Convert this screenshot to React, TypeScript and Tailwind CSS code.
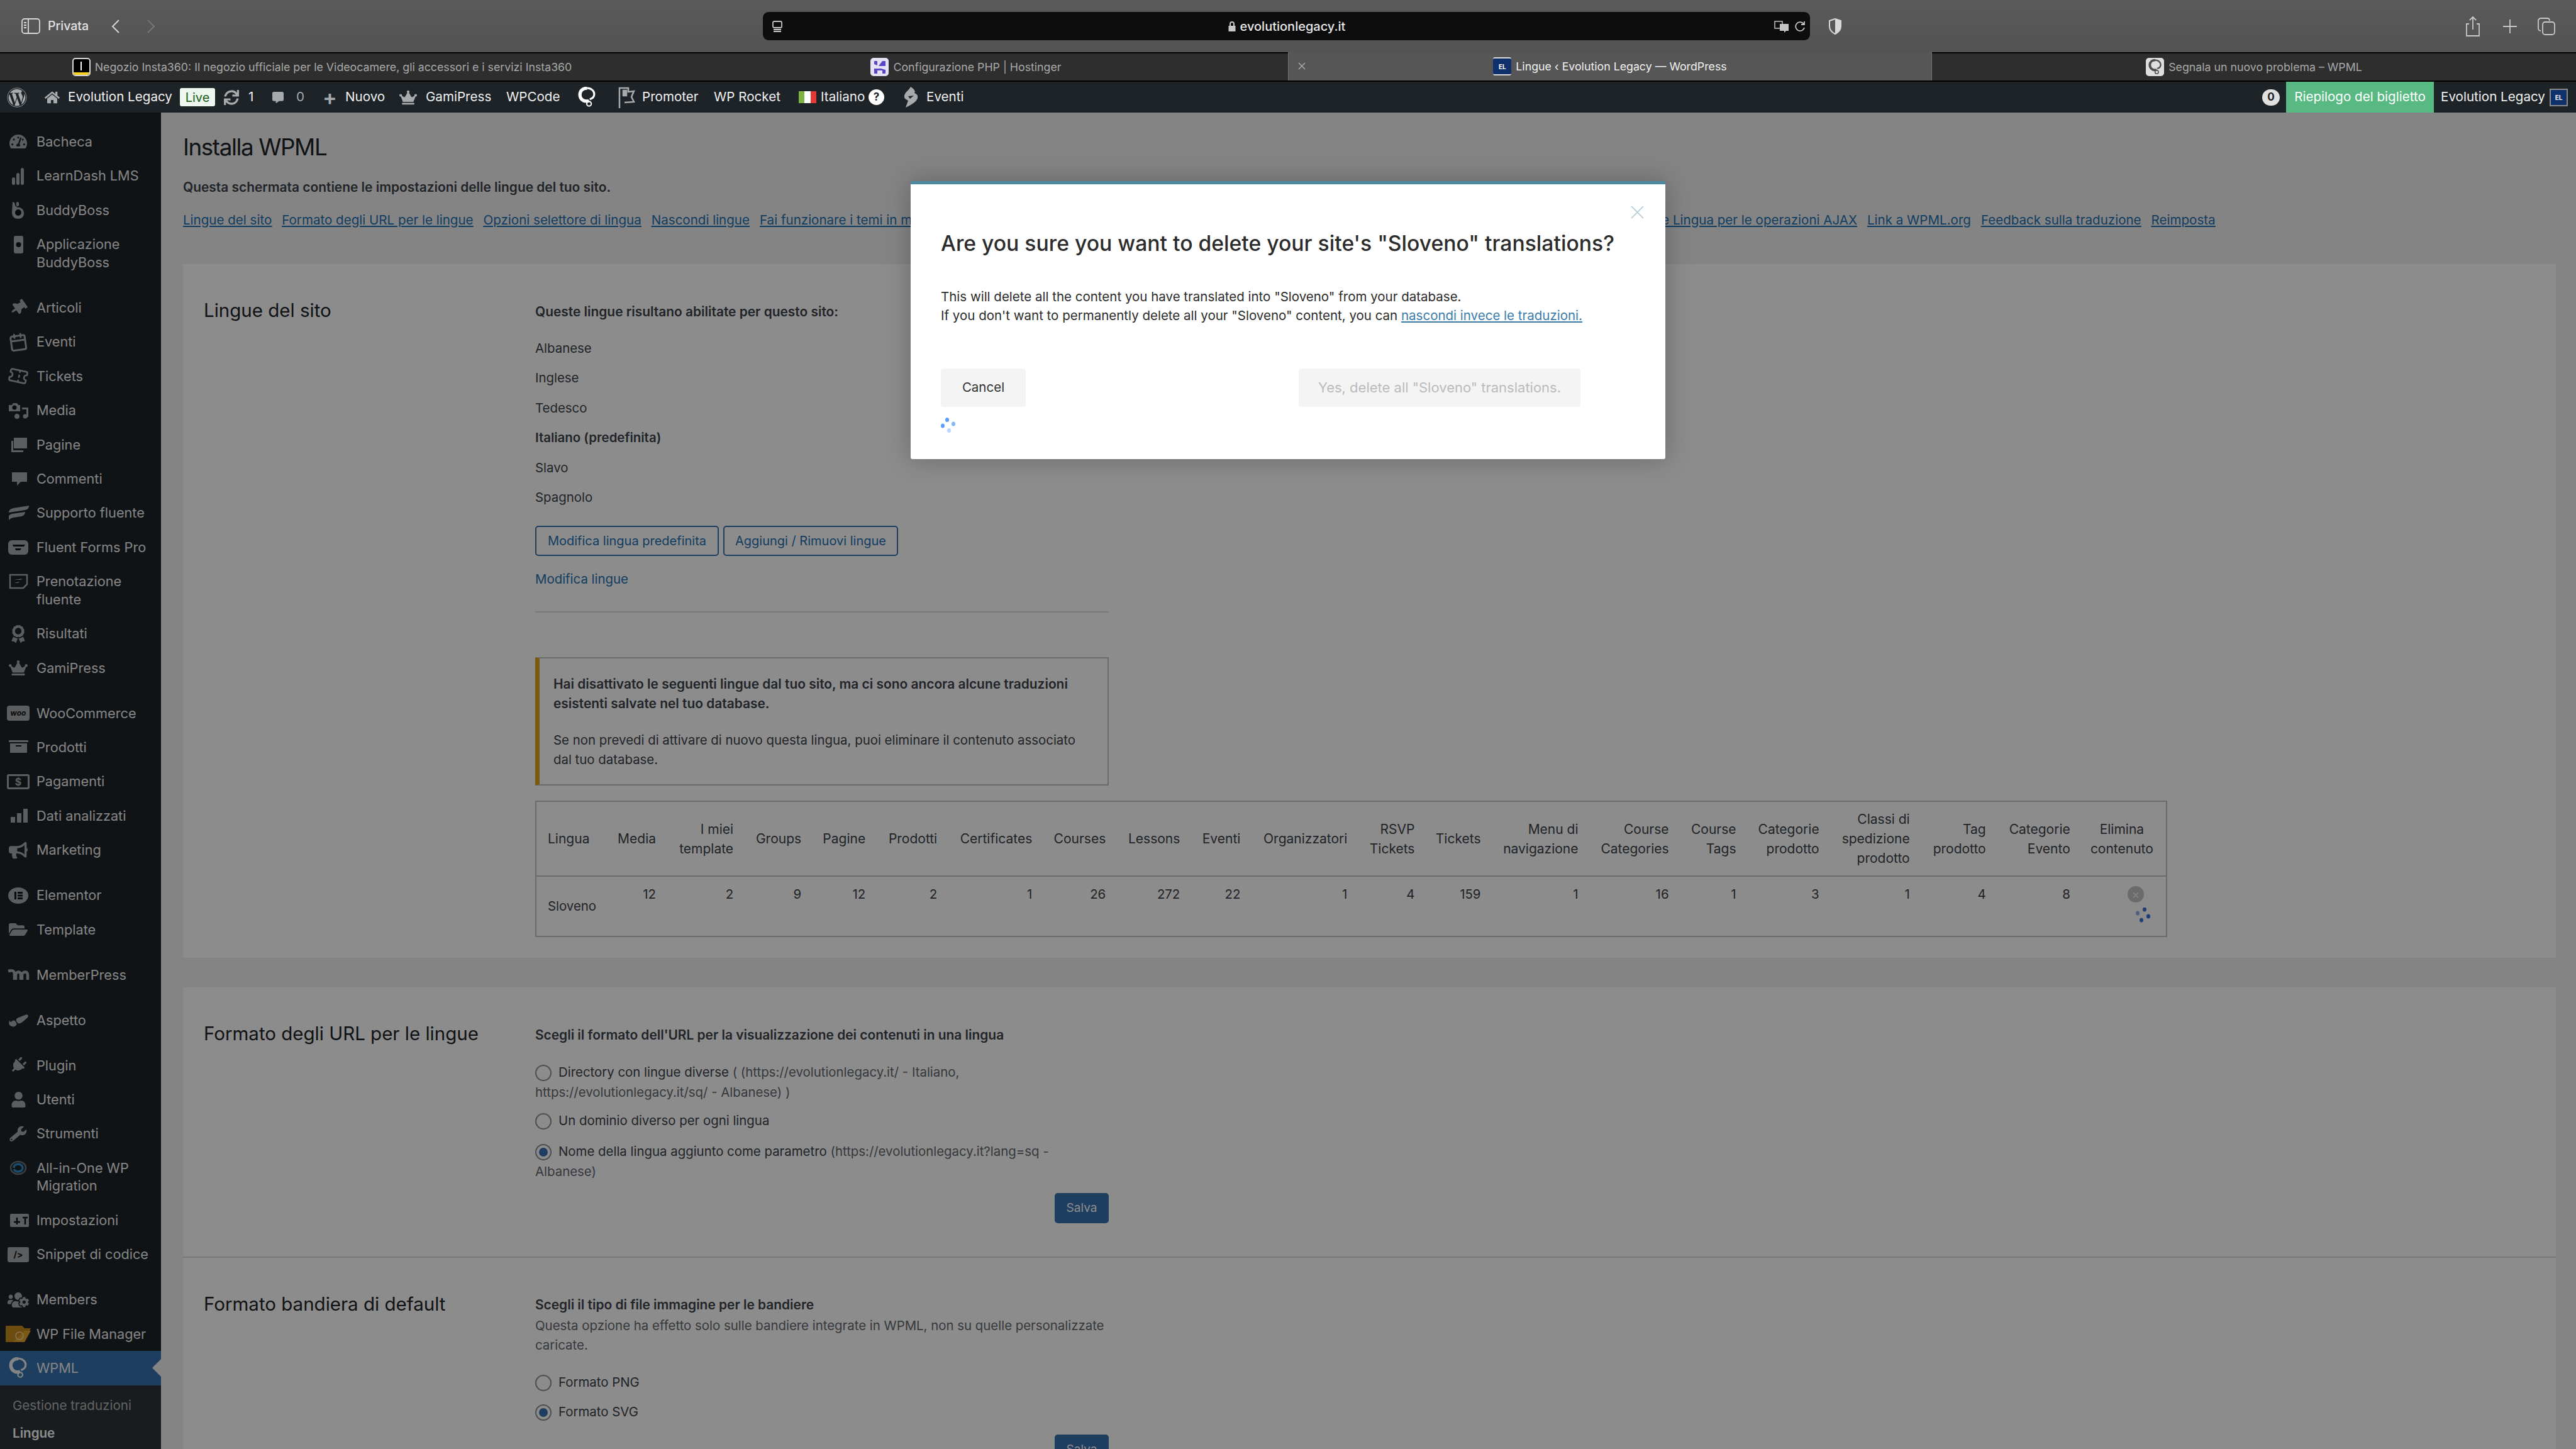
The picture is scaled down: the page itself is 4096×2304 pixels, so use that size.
import type { ReactNode } from "react"
import { Calendar, Ticket } from "lucide-react"
import {
  FaWordpress, FaHome, FaSync, FaCrown, FaTachometerAlt, FaThumbtack, FaCommentAlt, FaAward,
  FaFolderOpen, FaBullhorn, FaPaintBrush, FaPlug, FaUser, FaWrench, FaUsersCog,
} from "react-icons/fa"

const C = "#a7aaad"

function WpmlLogo({ color = "#fff", size = 32 }: { color?: string; size?: number }) {
  return (
    <svg width={size} height={size * 1.15} viewBox="0 0 28 32" fill="none">
      <path d="M14 2C7 2 3 6.500 3 12c0 6 4.500 10 10 10 1.500 0 3-.4 4-1" stroke={color} strokeWidth="5" />
      <path d="M14 2c6 0 11 4 11 9 0 4-3 7-7 8" stroke={color} strokeWidth="3" />
      <circle cx="17" cy="26" r="3.500" stroke={color} strokeWidth="2" />
    </svg>
  )
}

function Spinner({ dim = false }: { dim?: boolean }) {
  return dim ? (
    <svg width="24" height="24" viewBox="0 0 24 24">
      <ellipse cx="14" cy="3" rx="3" ry="3.500" fill="#3b6fd0" />
      <ellipse cx="3" cy="9" rx="3" ry="3.500" fill="#8fb0e6" />
      <ellipse cx="20" cy="14" rx="3" ry="3.500" fill="#2f6fe0" />
      <ellipse cx="9" cy="20" rx="3" ry="3.500" fill="#3f78d8" />
    </svg>
  ) : (
    <svg width="24" height="24" viewBox="0 0 24 24">
      <ellipse cx="10" cy="3.500" rx="3" ry="3.500" fill="#5e9eff" />
      <ellipse cx="20" cy="10" rx="3" ry="3.500" fill="#86b6ff" />
      <ellipse cx="3" cy="13" rx="3" ry="3.500" fill="#5e9eff" />
      <ellipse cx="13" cy="20.500" rx="3" ry="3.500" fill="#bcd6ff" />
    </svg>
  )
}

const S = (d: ReactNode, w = 36, h = 30) => (
  <svg width={w} height={h} viewBox={`0 0 ${w} ${h}`} fill={C}>{d}</svg>
)

type MenuItem = { label: string; icon: ReactNode; sep?: boolean; active?: boolean }

const menu: MenuItem[] = [
  { label: "Bacheca", icon: <FaTachometerAlt size={28} color={C} /> },
  { label: "LearnDash LMS", icon: S(<><rect x="8" y="17" width="5" height="12" rx="2.500" /><rect x="15" y="10" width="5" height="19" rx="2.500" /><rect x="22" y="2" width="5" height="27" rx="2.500" /></>) },
  { label: "BuddyBoss", icon: S(<><path d="M9 2c3 0 4 3 4 6l4 3c5-1 10 3 10 9s-4 9-9 9-10-3-10-10z" /><circle cx="18" cy="19" r="5" fill="#101518" /><rect x="15" y="2" width="4" height="7" rx="2" /></>) },
  { label: "Applicazione\nBuddyBoss", icon: S(<><rect x="11" y="1" width="15" height="28" rx="3" /><circle cx="18.500" cy="15" r="4" fill="#101518" /></>) },
  { label: "Articoli", sep: true, icon: <FaThumbtack size={26} color={C} className="rotate-[55deg]" /> },
  { label: "Eventi", icon: <Calendar size={30} color={C} strokeWidth={2.4} className="-rotate-[8deg]" /> },
  { label: "Tickets", icon: <Ticket size={32} color={C} strokeWidth={2} className="rotate-[12deg]" /> },
  { label: "Media", icon: S(<><path d="M3 6h5l2-3h6l2 3h3v10H3z" /><circle cx="12" cy="10" r="3.500" fill="#101518" /><rect x="24" y="10" width="10" height="3" /><rect x="31" y="10" width="3" height="15" /><circle cx="29" cy="24" r="3.500" /><circle cx="16" cy="24" r="4" /></>) },
  { label: "Pagine", icon: S(<><rect x="11" y="4" width="21" height="17" /><path d="M7 9h3v15h16v3H7z" /></>) },
  { label: "Commenti", icon: S(<path d="M8 5h24v15H22l-6 6v-6H8z" />) },
  { label: "Supporto fluente", icon: S(<><path d="M3 14c0-4 3-6 7-7l25-4c0 4-2 6-6 7z" /><path d="M3 27V20c0-2 2-3 5-4l21-3c0 3-2 6-6 7L10 22c-4 1-7 3-7 5z" /></>) },
  { label: "Fluent Forms Pro", icon: S(<><rect x="2" y="4" width="32" height="23" rx="6" /><path d="M9 11h20l-2 3H10zM13 17h10l-2 3h-7z" fill="#101518" /></>) },
  { label: "Prenotazione\nfluente", icon: S(<><path d="M5 5h27v15l-6 6H5z" fill="none" stroke={C} strokeWidth="2.500" /><path d="M11 13l14-2-3 2zM11 18l9-2-2 2z" /></>) },
  { label: "Risultati", icon: <FaAward size={28} color={C} /> },
  { label: "GamiPress", icon: <FaCrown size={30} color={C} /> },
  { label: "WooCommerce", sep: true, icon: <div className="flex h-[24px] w-[36px] items-center justify-center rounded-[4px] bg-[#a7aaad] text-[12px] font-bold italic leading-none text-[#101518]">woo</div> },
  { label: "Prodotti", icon: S(<><rect x="3" y="4" width="31" height="3" /><path d="M5 9h27v15H5z" /><rect x="14" y="12" width="9" height="2" fill="#101518" /></>) },
  { label: "Pagamenti", icon: <div className="flex h-[24px] w-[36px] items-center justify-center rounded-[3px] border-[3px] border-[#a7aaad] text-[16px] font-bold leading-none text-[#a7aaad]">$</div> },
  { label: "Dati analizzati", icon: S(<><rect x="6" y="17" width="7" height="9" /><rect x="16" y="11" width="7" height="15" /><rect x="26" y="4" width="7" height="22" /></>) },
  { label: "Marketing", icon: <FaBullhorn size={30} color={C} /> },
  { label: "Elementor", sep: true, icon: S(<><ellipse cx="18" cy="15" rx="16" ry="13" /><rect x="12" y="9" width="3" height="12" fill="#101518" /><rect x="17" y="9" width="8" height="3" fill="#101518" /><rect x="17" y="13.500" width="8" height="3" fill="#101518" /><rect x="17" y="18" width="8" height="3" fill="#101518" /></>) },
  { label: "Template", icon: <FaFolderOpen size={30} color={C} /> },
  { label: "MemberPress", sep: true, icon: S(<path d="M2 9c8-2 10 0 10 6v8M14 23v-8c0-5 8-7 8 0v8M24 23v-8c0-5 9-7 9 0v8" fill="none" stroke={C} strokeWidth="4.500" />) },
  { label: "Aspetto", sep: true, icon: <FaPaintBrush size={26} color={C} className="rotate-[20deg]" /> },
  { label: "Plugin", sep: true, icon: <FaPlug size={26} color={C} className="rotate-[45deg]" /> },
  { label: "Utenti", icon: <FaUser size={25} color={C} /> },
  { label: "Strumenti", icon: <FaWrench size={26} color={C} className="rotate-[5deg]" /> },
  { label: "All-in-One WP\nMigration", icon: S(<><path d="M6 15c0-6 6-10 12-10s12 4 12 10-6 10-12 10S6 21 6 15z" fill="none" stroke={C} strokeWidth="2.500" opacity=".6" /><path d="M11 15c0-4 3-6 7-6s7 3 7 6-3 6-7 6-6-2-7-4" fill="none" stroke="#2f8fd0" strokeWidth="3.500" /></>) },
  { label: "Impostazioni", icon: S(<><rect x="6" y="5" width="30" height="21" rx="2" /><path d="M12 18h10M17 11v11M26 11h8M30 11v11" stroke="#101518" strokeWidth="2.500" /></>, 38) },
  { label: "Snippet di codice", icon: <div className="flex h-[24px] w-[34px] items-center justify-center rounded-[3px] bg-[#a7aaad] text-[14px] font-bold leading-none text-[#101518]">/&gt;</div> },
  { label: "Members", sep: true, icon: <FaUsersCog size={34} color={C} /> },
  { label: "WP File Manager", icon: <svg width="44" height="30" viewBox="0 0 44 30"><path d="M2 2h26l4 4h10l-10 22H2z" fill="#c78a1e" /><path d="M14 28 32 10h10L32 28z" fill="#e0a52f" /><circle cx="24" cy="18" r="6" fill="none" stroke="#f3d9a4" strokeWidth="1.500" /></svg> },
]

const tableCols = [
  { label: "Lingua", value: "Sloveno", w: "w-[113px]" },
  { label: "Media", value: "12", w: "w-[94px]" },
  { label: "I miei\ntemplate", value: "2", w: "w-[123px]" },
  { label: "Groups", value: "9", w: "w-[108px]" },
  { label: "Pagine", value: "12", w: "w-[102px]" },
  { label: "Prodotti", value: "2", w: "w-[114px]" },
  { label: "Certificates", value: "1", w: "w-[151px]" },
  { label: "Courses", value: "26", w: "w-[117px]" },
  { label: "Lessons", value: "272", w: "w-[118px]" },
  { label: "Eventi", value: "22", w: "w-[96px]" },
  { label: "Organizzatori", value: "1", w: "w-[170px]" },
  { label: "RSVP\nTickets", value: "4", w: "w-[107px]" },
  { label: "Tickets", value: "159", w: "w-[105px]" },
  { label: "Menu di\nnavigazione", value: "1", w: "w-[155px]" },
  { label: "Course\nCategories", value: "16", w: "w-[144px]" },
  { label: "Course\nTags", value: "1", w: "w-[107px]" },
  { label: "Categorie\nprodotto", value: "3", w: "w-[132px]" },
  { label: "Classi di\nspedizione\nprodotto", value: "1", w: "w-[144px]" },
  { label: "Tag\nprodotto", value: "4", w: "w-[121px]" },
  { label: "Categorie\nEvento", value: "8", w: "w-[134px]" },
]

function Favicon({ kind }: { kind: "insta" | "host" | "el" | "wpml" }) {
  if (kind === "insta")
    return (
      <div className="flex h-[29px] w-[29px] flex-col overflow-hidden rounded-[5px] border-2 border-[#d8d8d8] bg-black">
        <div className="flex flex-1 items-center justify-center"><div className="h-[14px] w-[2px] bg-white" /></div>
        <div className="h-[4px] bg-[#f5d020]" />
      </div>
    )
  if (kind === "host")
    return (
      <div className="flex h-[29px] w-[29px] items-center justify-center rounded-[5px] bg-[#e4e2f4]">
        <svg width="22" height="22" viewBox="0 0 22 22" fill="#5b45c4"><path d="M2 1h5v7l-5-2zM15 1h5v8H9zM2 13h11l7 2v6h-5v-5H7v5H2z" /></svg>
      </div>
    )
  if (kind === "el")
    return (
      <div className="flex h-[29px] w-[29px] items-center justify-center rounded-[3px] border-y-2 border-[#d8d8d8] bg-[#10306b] text-[10px] font-bold leading-none text-white">EL</div>
    )
  return (
    <div className="flex h-[29px] w-[29px] items-center justify-center rounded-[5px] bg-[#dedede]"><WpmlLogo color="#4d4d4d" size={22} /></div>
  )
}

function Tab({ kind, title, active = false }: { kind: "insta" | "host" | "el" | "wpml"; title: string; active?: boolean }) {
  return (
    <div className={`relative flex h-[45px] items-center justify-center gap-[7px] ${active ? "border-x border-[#707070] bg-[#565656] text-[#f0f0f0]" : "border-t-2 border-black bg-[#2e2e2e] text-[#a8a8a8]"}`}>
      {active && (
        <svg className="absolute left-[15px] top-[16px]" width="12" height="12" viewBox="0 0 12 12" stroke="#a8a8a8" strokeWidth="1.500"><path d="m1 1 10 10M11 1 1 11" /></svg>
      )}
      <Favicon kind={kind} />
      <span className="whitespace-nowrap text-[17.75px] leading-none">{title}</span>
    </div>
  )
}

function Radio({ checked = false }: { checked?: boolean }) {
  return (
    <span className="mr-[11px] inline-flex h-[26px] w-[26px] items-center justify-center rounded-full border-2 border-[#8c8f94] align-middle">
      {checked && <span className="h-[14px] w-[14px] rounded-full bg-[#3871af]" />}
    </span>
  )
}

function Save() {
  return (
    <div className="flex justify-end">
      <button className="h-[48px] w-[86px] rounded-[5px] bg-[#3871af] text-[19px] text-white">Salva</button>
    </div>
  )
}

function Sidebar() {
  return (
    <aside className="h-full w-[256px] shrink-0 bg-[#1d2327] pt-[19.200px] text-[21.7px] leading-[28.8px] text-[#f0f0f1]">
      {menu.map((m) => (
        <div key={m.label}>
          {m.sep && <div className="h-[17.600px]" />}
          <div className="flex py-[12.800px]">
            <div className="flex h-[28.800px] w-[58px] shrink-0 items-center justify-center">{m.icon}</div>
            <div className="whitespace-pre-line">{m.label}</div>
          </div>
        </div>
      ))}
      <div className="relative flex bg-[#3871af] py-[12.800px]">
        <div className="flex h-[28.800px] w-[58px] shrink-0 items-center justify-center"><WpmlLogo color="#f0f0f1" size={30} /></div>
        <div>WPML</div>
        <div className="absolute right-0 top-[13px] h-0 w-0 border-y-[14px] border-r-[14px] border-y-transparent border-r-[#f0f0f1]" />
      </div>
      <div className="h-full bg-[#2c3338] pl-[20px] pt-[18px] text-[20.6px]">
        <div className="text-[#f0f0f1b3]">Gestione traduzioni</div>
        <div className="mt-[16px] font-semibold text-white">Lingue</div>
      </div>
    </aside>
  )
}

function AdminBar() {
  return (
    <div className="flex h-[51px] items-center whitespace-nowrap border-t-2 border-black bg-[#1d2327] text-[20.6px] leading-none text-[#f0f0f1]">
      <div className="ml-[11px] w-[32px]"><FaWordpress size={32} color={C} /></div>
      <div className="ml-[28px] w-[23px]"><FaHome size={24} color={C} /></div>
      <div className="ml-[14px] w-[165px]">Evolution Legacy</div>
      <div className="ml-[13px] flex h-[29px] w-[56px] items-center justify-center rounded-[3px] bg-[#edf7ed] text-[20px] text-[#1a5c1a]">Live</div>
      <div className="ml-[14px] w-[25px]"><FaSync size={24} color={C} /></div>
      <div className="ml-[14px] w-[10px]">1</div>
      <div className="ml-[28px] w-[18px]"><FaCommentAlt size={18} color={C} /></div>
      <div className="ml-[20px] w-[12px] text-[#a7aaad]">0</div>
      <div className="ml-[30px] w-[19px] text-[34px] font-semibold leading-none text-[#a7aaad]">+</div>
      <div className="ml-[17px] w-[61px]">Nuovo</div>
      <div className="ml-[25px] w-[28px]"><FaCrown size={28} color={C} /></div>
      <div className="ml-[14px] w-[102px]">GamiPress</div>
      <div className="ml-[26px] w-[84px]">WPCode</div>
      <div className="ml-[30px] w-[28px]"><WpmlLogo size={29} /></div>
      <div className="ml-[35px] w-[28px]">
        <svg width="28" height="36" viewBox="0 0 28 36" fill="none" stroke={C} strokeWidth="2.500"><path d="M3 35V3h14v6l9-1-4 9 4 8-15 1" /><path d="M9 7h5v8H9z" fill={C} /></svg>
      </div>
      <div className="ml-[11px] w-[89px]">Promoter</div>
      <div className="ml-[25px] w-[104px]">WP Rocket</div>
      <div className="ml-[31px] flex h-[19px] w-[28px]"><div className="flex-1 bg-[#7cb342]" /><div className="flex-1 bg-white" /><div className="flex-1 bg-[#e53935]" /></div>
      <div className="ml-[7px] w-[71px]">Italiano</div>
      <div className="ml-[5px] flex h-[25px] w-[25px] items-center justify-center rounded-full bg-white text-[17px] font-bold text-[#1d2327]">?</div>
      <div className="ml-[28px] w-[28px]">
        <svg width="28" height="36" viewBox="0 0 28 36" fill={C}><path d="M14 1c-3 6-9 8-10 14-1 5 3 6 6 8l-4 11c6-3 17-8 19-15 1-5-2-7-5-8 2-3 0-6-6-10z" /><path d="M10 16l9-1-6 5z" fill="#1d2327" /></svg>
      </div>
      <div className="ml-[11px] w-[58px]">Eventi</div>
      <div className="ml-auto flex h-[26px] w-[28px] items-center justify-center rounded-full bg-[#e0e0e0] text-[17px] font-bold text-[#1d2327]">0</div>
      <div className="ml-[10px] flex h-full w-[235px] items-center justify-center bg-[#58b982] text-white">Riepilogo del biglietto</div>
      <div className="ml-[11px] w-[164px]">Evolution Legacy</div>
      <div className="ml-[9px] mr-[13px] flex h-[28px] w-[29px] items-center justify-center border-2 border-[#8a8a8a] bg-[#10306b] text-[10px] font-bold">EL</div>
    </div>
  )
}

function Toolbar() {
  return (
    <div className="flex h-[83px] items-center whitespace-nowrap bg-gradient-to-b from-[#5a5a5a] to-[#535353] text-[#e2e2e2]">
      <svg className="ml-[34px]" width="30" height="25" viewBox="0 0 30 25" fill="none" stroke="#d8d8d8" strokeWidth="1.800">
        <rect x="1" y="1" width="28" height="23" rx="4" /><path d="M11 1v23M4 7h4M4 11h4M4 15h4" />
      </svg>
      <span className="ml-[12px] w-[70px] text-[19.5px] font-medium">Privata</span>
      <svg className="ml-[30px]" width="16" height="24" viewBox="0 0 16 24" fill="none" stroke="#d6d6d6" strokeWidth="2"><path d="M13 2 3 12l10 10" /></svg>
      <svg className="ml-[40px]" width="16" height="24" viewBox="0 0 16 24" fill="none" stroke="#767676" strokeWidth="2"><path d="m3 2 10 10L3 22" /></svg>
      <div className="ml-[965px] flex h-[45px] w-[1665px] items-center justify-between rounded-[9px] bg-[#0d0d0d] pl-[14px] pr-[6px]">
        <svg width="18" height="18" viewBox="0 0 18 18" fill="none" stroke="#c4c4c4" strokeWidth="1.800"><rect x="2" y="1" width="14" height="10" rx="2" /><path d="M3 14h12M3 17h12" /></svg>
        <div className="ml-[26px] flex items-center gap-[6px] text-[20px] font-medium text-[#e8e8e8]">
          <svg width="14" height="18" viewBox="0 0 14 18" fill="#c8c8c8"><path d="M3 8V5a4 4 0 0 1 8 0v3h1.500v9h-11V8zm2 0h4V5a2 2 0 0 0-4 0z" /></svg>
          evolutionlegacy.it
        </div>
        <div className="flex items-center gap-[8px]">
          <svg width="26" height="20" viewBox="0 0 26 20"><path d="M2 2h12v11H2z" fill="none" stroke="#c4c4c4" strokeWidth="1.500" /><path d="M10 6h14v11h-4l-3 3v-3h-7z" fill="#c4c4c4" /></svg>
          <svg width="18" height="20" viewBox="0 0 18 20" fill="none" stroke="#c4c4c4" strokeWidth="1.800"><path d="M15 12a7 7 0 1 1-2-7l2 2M15 2v5h-5" /></svg>
        </div>
      </div>
      <svg className="ml-[29px]" width="22" height="26" viewBox="0 0 22 26"><path d="M11 1 2 4v9c0 6 5 10 9 12 4-2 9-6 9-12V4z" fill="none" stroke="#d8d8d8" strokeWidth="2" /><path d="M11 1v24c4-2 9-6 9-12V4z" fill="#d8d8d8" /></svg>
      <div className="ml-auto flex items-center">
        <svg width="24" height="34" viewBox="0 0 24 34" fill="none" stroke="#c8c8c8" strokeWidth="1.800"><path d="M6 13H2v19h20V13h-4M12 22V2M7 7l5-5 5 5" /></svg>
        <svg className="ml-[35px]" width="24" height="24" viewBox="0 0 24 24" stroke="#c8c8c8" strokeWidth="1.800"><path d="M12 1v22M1 12h22" /></svg>
        <svg className="ml-[32px] mr-[33px]" width="28" height="28" viewBox="0 0 28 28" fill="none" stroke="#c8c8c8" strokeWidth="1.800"><rect x="8" y="7" width="19" height="20" rx="4" /><path d="M5 21c-2 0-4-1-4-4V5c0-2 2-4 4-4h10c3 0 4 2 4 4" /></svg>
      </div>
    </div>
  )
}

function Modal() {
  return (
    <div className="absolute left-[1448px] top-[109px] h-[442px] w-[1200px] rounded-[3px] border-t-[5px] border-[#4c889f] bg-white pl-[48px] pt-[70px] text-[#2c2c2c] shadow-[0_0_40px_rgba(0,0,0,0.25)]">
      <svg className="absolute right-[34px] top-[34px]" width="21" height="21" viewBox="0 0 21 21" stroke="#bcd3dd" strokeWidth="1.800"><path d="m1 1 19 19M20 1 1 20" /></svg>
      <h2 className="whitespace-nowrap text-[33.7px] font-medium leading-[48px]">Are you sure you want to delete your site's "Sloveno" translations?</h2>
      <p className="mt-[46px] whitespace-nowrap text-[20.5px] leading-[30px]">
        This will delete all the content you have translated into "Sloveno" from your database.<br />
        If you don't want to permanently delete all your "Sloveno" content, you can{" "}
        <a className="text-[#3a7cab] underline">nascondi invece le traduzioni.</a>
      </p>
      <div className="mt-[69px] flex w-[1017px] justify-between text-[20.5px]">
        <button className="h-[61px] w-[135px] rounded-[4px] bg-[#f4f4f4] text-[#333]">Cancel</button>
        <button className="h-[61px] w-[448px] rounded-[4px] bg-[#f4f4f4] text-[22px] text-[#bbb]">Yes, delete all "Sloveno" translations.</button>
      </div>
      <div className="mt-[17px]"><Spinner /></div>
    </div>
  )
}

function LangTable() {
  return (
    <table className="mt-[24px] w-[2595px] table-fixed border-collapse border-2 border-[#c3c4c7]">
      <colgroup>
        {tableCols.map((c) => <col key={c.label} className={c.w} />)}
        <col className="w-[137px]" />
      </colgroup>
      <thead>
        <tr className="h-[119px] border-b-2 border-[#c3c4c7] text-[21px] leading-[31px]">
          {tableCols.map((c, i) => (
            <th key={c.label} className={`whitespace-pre-line pr-[16px] font-normal ${i === 0 ? "pl-[18px] text-left" : "text-right"}`}>{c.label}</th>
          ))}
          <th className="pl-[14px] pr-[18px] text-center font-normal">Elimina contenuto</th>
        </tr>
      </thead>
      <tbody>
        <tr className="h-[96px]">
          {tableCols.map((c, i) => (
            <td key={c.label} className={i === 0 ? "pl-[18px] align-middle" : "pr-[16px] pt-[12px] text-right align-top"}>{c.value}</td>
          ))}
          <td className="pl-[75px] pt-[15px] align-top">
            <div className="flex h-[26px] w-[26px] items-center justify-center rounded-full bg-[#c3c4c7] text-[20px] leading-none text-[#f0f0f1]">×</div>
            <div className="ml-[13px] mt-[8px]"><Spinner dim /></div>
          </td>
        </tr>
      </tbody>
    </table>
  )
}

export default function App() {
  return (
    <div className="h-[2304px] w-[4096px] overflow-hidden bg-[#1d2327] font-['Inter',sans-serif]">
      <Toolbar />
      <div className="grid grid-cols-4"><Tab kind="insta" title="Negozio Insta360: Il negozio ufficiale per le Videocamere, gli accessori e i servizi Insta360" />
        <Tab kind="host" title="Configurazione PHP | Hostinger" />
        <Tab kind="el" title="Lingue ‹ Evolution Legacy — WordPress" active />
        <Tab kind="wpml" title="Segnala un nuovo problema – WPML" />
      </div>
      <AdminBar />

      <div className="relative flex h-[2125px] overflow-hidden">
        <Sidebar />
        <main className="flex-1 bg-[#f0f0f1] pl-[35px] pr-[32px] pt-[29px] text-[20.4px] leading-[32px] text-[#3c434a]">
          <h1 className="text-[36.8px] leading-[52px] tracking-[-1.4px] text-[#1d2327]">Installa WPML</h1>
          <p className="mt-[22px] text-[20.9px] font-semibold">Questa schermata contiene le impostazioni delle lingue del tuo sito.</p>
          <div className="mt-[20px] flex gap-[16px] whitespace-nowrap text-[20.55px] text-[#2271b1] underline">
            <a>Lingue del sito</a>
            <a>Formato degli URL per le lingue</a>
            <a>Opzioni selettore di lingua</a>
            <a>Nascondi lingue</a>
            <div className="flex w-[1745px] justify-between">
              <a>Fai funzionare i temi in multilingua</a>
              <a>Imposta il cookie Lingua per le operazioni AJAX</a>
            </div>
            <a>Link a WPML.org</a>
            <a>Feedback sulla traduzione</a>
            <a>Reimposta</a>
          </div>

          <section className="mt-[54px] grid h-[1103px] grid-cols-[527px_912px] bg-white pl-[33px] pt-[53px]">
            <h3 className="text-[29.5px] leading-[40px] text-[#1d2327]">Lingue del sito</h3>
            <div className="pt-[7px]">
              <p className="text-[20.9px] font-semibold">Queste lingue risultano abilitate per questo sito:</p>
              <div className="mt-[18px] leading-[47.400px]">
                <div>Albanese</div>
                <div>Inglese</div>
                <div>Tedesco</div>
                <div className="font-semibold">Italiano (predefinita)</div>
                <div>Slavo</div>
                <div>Spagnolo</div>
              </div>
              <div className="mt-[22px] flex gap-[7px] text-[20px] text-[#2271b1]">
                <button className="h-[48px] w-[292px] rounded-[5px] border-2 border-[#3871af]">Modifica lingua predefinita</button>
                <button className="h-[48px] w-[278px] rounded-[5px] border-2 border-[#3871af]">Aggiungi / Rimuovi lingue</button>
              </div>
              <a className="mt-[21px] block text-[#2271b1]">Modifica lingue</a>
              <div className="mt-[35px] h-[2px] bg-[#dcdcde]" />
              <div className="mt-[71px] h-[204px] border-2 border-l-[7px] border-[#c3c4c7] border-l-[#dba617] pl-[22px] pt-[26px] leading-[30.400px]">
                <p className="text-[20.9px] font-semibold">Hai disattivato le seguenti lingue dal tuo sito, ma ci sono ancora alcune traduzioni<br />esistenti salvate nel tuo database.</p>
                <p className="mt-[28px]">Se non prevedi di attivare di nuovo questa lingua, puoi eliminare il contenuto associato<br />dal tuo database.</p>
              </div>
              <LangTable />
            </div>
          </section>

          <section className="mt-[47px] grid h-[428px] grid-cols-[527px_912px] bg-white pl-[33px] pt-[53px]">
            <h3 className="text-[29.5px] leading-[40px] text-[#1d2327]">Formato degli URL per le lingue</h3>
            <div className="pt-[7px]">
              <p className="text-[20.9px] font-semibold">Scegli il formato dell'URL per la visualizzazione dei contenuti in una lingua</p>
              <p className="mt-[27px]"><Radio />Directory con lingue diverse <span className="text-[#646970]">( (https://evolutionlegacy.it/ - Italiano,<br />https://evolutionlegacy.it/sq/ - Albanese) )</span></p>
              <p className="mt-[13px]"><Radio />Un dominio diverso per ogni lingua</p>
              <p className="mt-[17px]"><Radio checked />Nome della lingua aggiunto come parametro <span className="text-[#646970]">(https://evolutionlegacy.it?lang=sq -<br />Albanese)</span></p>
              <div className="mt-[18px]"><Save /></div>
            </div>
          </section>

          <section className="grid h-[340px] grid-cols-[527px_912px] border-t-2 border-[#dcdcde] bg-white pl-[33px] pt-[53px]">
            <h3 className="text-[29.5px] leading-[40px] text-[#1d2327]">Formato bandiera di default</h3>
            <div className="pt-[6px]">
              <p className="text-[20.9px] font-semibold">Scegli il tipo di file immagine per le bandiere</p>
              <p className="mt-[1px] leading-[31px] text-[#646970]">Questa opzione ha effetto solo sulle bandiere integrate in WPML, non su quelle personalizzate<br />caricate.</p>
              <p className="mt-[28px]"><Radio />Formato PNG</p>
              <p className="mt-[15px]"><Radio checked />Formato SVG</p>
              <div className="mt-[20px]"><Save /></div>
            </div>
          </section>
        </main>
        <div className="absolute inset-0 bg-black/45" />
        <Modal />
      </div>
    </div>
  )
}
